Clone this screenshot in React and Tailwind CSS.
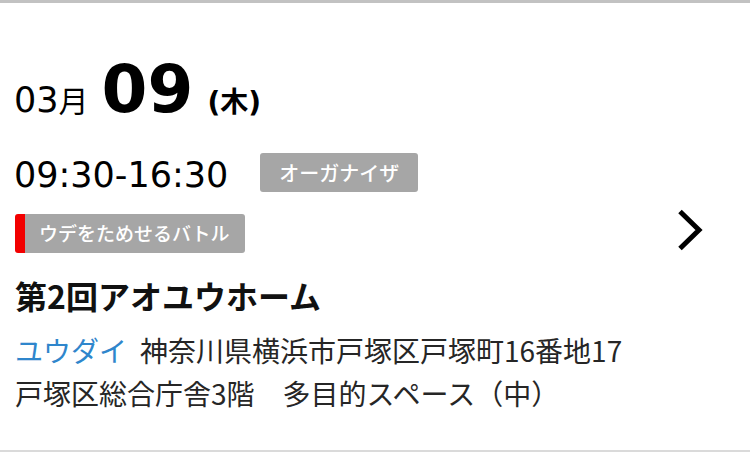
import React from 'react';

const jp = { fontFamily: '"Noto Sans CJK JP", "Noto Sans", sans-serif' };
const num = { fontFamily: '"DejaVu Sans", "Noto Sans CJK JP", sans-serif' };

export default function App() {
  const event = {
    month: '03',
    day: '09',
    weekday: '木',
    time: '09:30-16:30',
    role: 'オーガナイザ',
    category: 'ウデをためせるバトル',
    title: '第2回アオユウホーム',
    venue: 'ユウダイ',
    address: '神奈川県横浜市戸塚区戸塚町16番地17',
    place: '戸塚区総合庁舎3階　多目的スペース（中）',
  };

  return (
    <div className="w-[750px] h-[452px] bg-white border-t-[3px] border-t-[#c2c2c2] border-b-2 border-b-[#dadada] flex">
      <div className="flex-1 pl-[14px] pt-[54px]">
        {/* date */}
        <div className="flex items-baseline text-black" style={num}>
          <span className="text-[35px] leading-none">
            {event.month}
            <span className="text-[30px]" style={jp}>月</span>
          </span>
          <span className="ml-[13px] text-[66px] font-bold leading-none">{event.day}</span>
          <span className="ml-[14px] text-[28px] font-bold leading-none">
            (<span style={jp}>{event.weekday}</span>)
          </span>
        </div>

        {/* time + role */}
        <div className="mt-[30px] flex items-start">
          <span className="mt-[5px] text-[35px] leading-none text-black" style={num}>{event.time}</span>
          <span
            className="ml-[32px] h-[39px] px-[19px] flex items-center rounded-[3px] bg-[#a6a6a6] text-white text-[20px] font-medium"
            style={jp}
          >
            {event.role}
          </span>
        </div>

        {/* category */}
        <div className="mt-[21px] ml-[1px] flex h-[39px] w-fit">
          <div className="w-[10px] rounded-l-[3px] bg-[#f20000]" />
          <div
            className="pl-[14px] pr-[15px] flex items-center rounded-r-[3px] bg-[#a6a6a6] text-white text-[19px] font-medium"
            style={jp}
          >
            {event.category}
          </div>
        </div>

        <h1 className="mt-[26px] pl-[1px] text-[32px] font-bold leading-none text-[#111]" style={jp}>
          {event.title}
        </h1>

        <div className="mt-[18px] pl-[1px] text-[28px] leading-[43px] text-[#262626]" style={jp}>
          <div>
            <span className="text-[#2f86cc]">{event.venue}</span>
            <span className="ml-[13px]">{event.address}</span>
          </div>
          <div>{event.place}</div>
        </div>
      </div>

      <div className="flex items-center pr-[46px]">
        <svg width="28" height="44" viewBox="0 0 28 44" className="mt-[6px]">
          <path d="M4 3.5 L23 22 L4 40.5" fill="none" stroke="#000" strokeWidth="5" />
        </svg>
      </div>
    </div>
  );
}
